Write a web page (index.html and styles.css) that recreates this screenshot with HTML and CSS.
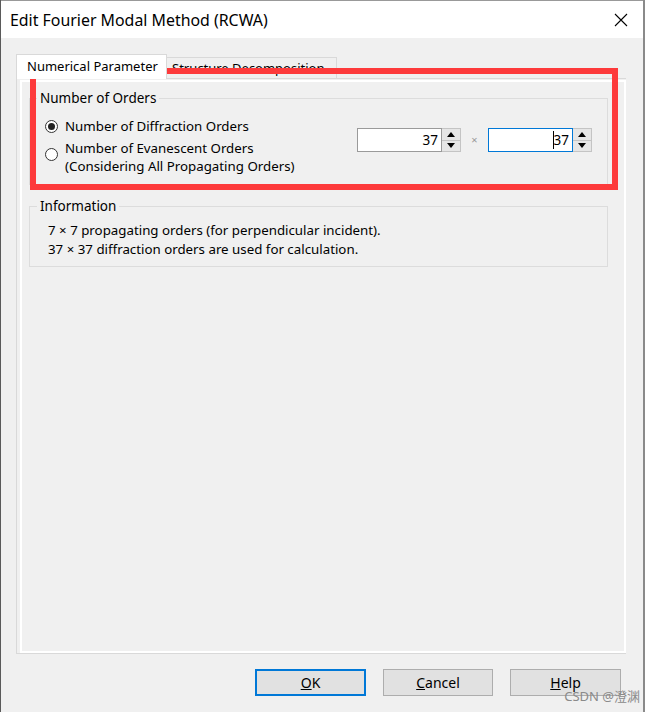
FILE: index.html
```html
<!DOCTYPE html>
<html>
<head>
	<title>Edit Fourier Modal Method (RCWA)</title>
	<link rel="stylesheet" href="styles.css">
</head>
<body>
	<div class="window">
		<div class="titlebar">
			<span class="title">Edit Fourier Modal Method (RCWA)</span>
			<svg class="close" width="14" height="14" viewBox="0 0 14 14">
				<path d="M1 1 L13 13 M13 1 L1 13" stroke="#000" stroke-width="1.1" fill="none"/>
			</svg>
		</div>

		<div class="client">
			<div class="tabs">
				<div class="tab active">Numerical Parameter</div>
				<div class="tab">Structure Decomposition</div>
			</div>

			<div class="page">
				<div class="page-inner">
					<fieldset class="group orders">
						<legend>Number of Orders</legend>
						<div class="orders-body">
							<div class="radios">
								<div class="radio first">
									<span class="dot checked"></span>
									<span>Number of Diffraction Orders</span>
								</div>
								<div class="radio second">
									<span class="dot"></span>
									<span>Number of Evanescent Orders<br>(Considering All Propagating Orders)</span>
								</div>
							</div>
							<div class="spins">
								<div class="spin">
									<div class="field">37</div>
									<div class="arrows">
										<span class="arrow up"></span>
										<span class="arrow down"></span>
									</div>
								</div>
								<span class="times">×</span>
								<div class="spin focus">
									<div class="field"><span class="caret"></span>37</div>
									<div class="arrows">
										<span class="arrow up"></span>
										<span class="arrow down"></span>
									</div>
								</div>
							</div>
						</div>
					</fieldset>

					<fieldset class="group info">
						<legend>Information</legend>
						<div class="info-line">7 × 7 propagating orders (for perpendicular incident).</div>
						<div class="info-line">37 × 37 diffraction orders are used for calculation.</div>
					</fieldset>
				</div>
			</div>

			<div class="buttons">
				<div class="btn default"><u>O</u>K</div>
				<div class="btn cancel"><u>C</u>ancel</div>
				<div class="btn"><u>H</u>elp</div>
			</div>
		</div>

		<!-- annotation frame drawn over the dialog -->
		<div class="mark"></div>
		<div class="watermark">CSDN @澄渊</div>
	</div>
</body>
</html>
```

FILE: styles.css
```css
* {
	box-sizing: border-box;
}

body {
	margin: 0;
	font-family: 'Noto Sans', 'Noto Sans CJK SC', sans-serif;
	font-size: 13.3px;
	color: #000;
	background-color: #f0f0f0;
}

.window {
	position: relative;
	width: 645px;
	height: 712px;
	display: flex;
	flex-direction: column;
	border-left: 1px solid #5a5a5a;
	border-right: 2px solid #8a8a8a;
	overflow: hidden;
}

.titlebar {
	height: 38px;
	background-color: #fff;
	display: flex;
	align-items: center;
	justify-content: space-between;
	padding: 0 15px 0 9px;
	border-top: 1px solid #999;
}

.title {
	font-size: 15.9px;
}

.client {
	flex: 1;
	display: flex;
	flex-direction: column;
	padding: 16px 22px 0 15px;
}

.tabs {
	display: flex;
	align-items: flex-end;
	height: 24px;
	font-size: 13px;
}

.tab {
	height: 21px;
	width: 170px;
	padding: 0 5px;
	line-height: 20px;
	border: 1px solid #d9d9d9;
	border-bottom: none;
	border-left: none;
	background-color: #f0f0f0;
	white-space: nowrap;
	overflow: hidden;
}

.tab.active {
	width: 151px;
	height: 25px;
	margin-bottom: -1px;
	padding-left: 10px;
	line-height: 23px;
	border-left: 1px solid #d9d9d9;
	background-color: #fff;
	position: relative;
	z-index: 1;
}

.page {
	height: 576px;
	width: 610px;
	border: 1px solid #d9d9d9;
	border-right: none;
	padding: 1px 0 0 3px;
}

.page-inner {
	height: 100%;
	border: 2px solid #fff;
	padding: 0 16px 0 7px;
}

.group {
	margin: 0;
	border: 1px solid #dcdcdc;
	min-width: 0;
}

.group legend {
	padding: 0 3px;
	line-height: 16px;
	font-size: 13.5px;
}

.orders {
	margin-top: 8px;
	padding: 10px 15px 9px 15px;
}

.orders legend {
	margin-left: -8px;
}

.orders-body {
	display: flex;
}

.radio {
	display: flex;
	align-items: flex-start;
}

.radio.first {
	line-height: 20px;
}

.radio.second {
	margin-top: 3px;
	line-height: 18px;
}

.dot {
	width: 13px;
	height: 13px;
	border: 1px solid #333;
	border-radius: 50%;
	background-color: #fff;
	margin-right: 7px;
	flex-shrink: 0;
	display: flex;
	align-items: center;
	justify-content: center;
}

.radio.first .dot {
	margin-top: 4px;
}

.radio.second .dot {
	margin-top: 9px;
}

.dot.checked::after {
	content: '';
	width: 7px;
	height: 7px;
	border-radius: 50%;
	background-color: #222;
}

.spins {
	margin-left: auto;
	margin-top: 12px;
	display: flex;
	align-items: flex-start;
}

.spin {
	display: flex;
}

.field {
	width: 85px;
	height: 24px;
	border: 1px solid #9a9a9a;
	background-color: #fff;
	text-align: right;
	padding-right: 3px;
	line-height: 22px;
	font-size: 13.5px;
}

.spin.focus .field {
	border-color: #0078d7;
}

.caret {
	display: inline-block;
	width: 1px;
	height: 18px;
	background-color: #000;
	vertical-align: -4px;
}

.arrows {
	width: 19px;
	height: 24px;
	display: flex;
	flex-direction: column;
	border: 1px solid #c4c4c4;
	border-left: none;
}

.arrow {
	flex: 1;
	background-color: #e6e6e6;
	display: flex;
	align-items: center;
	justify-content: center;
}

.arrow.up {
	border-bottom: 1px solid #c4c4c4;
}

.arrow.up::after {
	content: '';
	border-left: 4px solid transparent;
	border-right: 4px solid transparent;
	border-bottom: 5px solid #000;
}

.arrow.down::after {
	content: '';
	border-left: 4px solid transparent;
	border-right: 4px solid transparent;
	border-top: 5px solid #000;
}

.times {
	width: 27px;
	text-align: center;
	line-height: 24px;
	color: #999;
	font-size: 11px;
}

.info {
	margin-top: 13px;
	padding: 7px 10px 7px 18px;
}

.info legend {
	margin-left: -11px;
}

.info-line {
	line-height: 19px;
}

.buttons {
	display: flex;
	justify-content: flex-end;
	gap: 17px;
	margin-top: 15px;
}

.btn {
	width: 111px;
	height: 27px;
	border: 1px solid #adadad;
	background-color: #e1e1e1;
	text-align: center;
	line-height: 25px;
	font-size: 14px;
}

.btn.cancel {
	width: 110px;
}

.btn.default {
	border: 2px solid #0078d7;
	line-height: 23px;
}

.mark {
	position: absolute;
	left: 29px;
	top: 68px;
	width: 588px;
	height: 122px;
	border: 6px solid #fd3a3b;
}

.watermark {
	position: absolute;
	right: 3px;
	bottom: 7px;
	font-size: 13px;
	color: #8a8a8a;
}
```
